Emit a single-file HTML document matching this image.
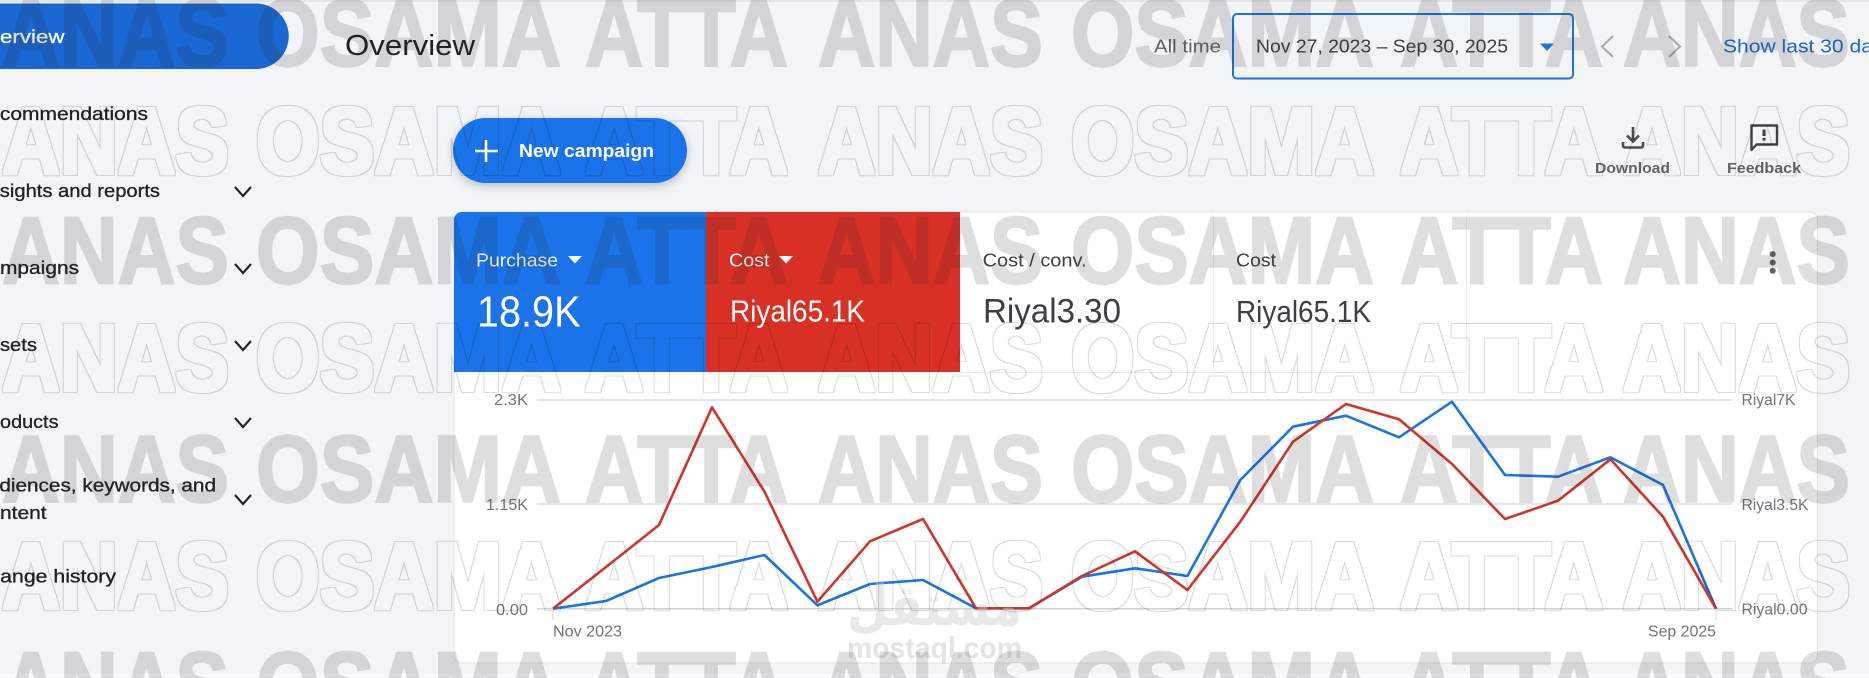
<!DOCTYPE html>
<html lang="en"><head><meta charset="utf-8"><title>Overview</title>
<style>
html,body{margin:0;padding:0;width:1869px;height:678px;overflow:hidden;background:#f3f4f6}
svg{display:block}
text{font-family:"Liberation Sans",sans-serif}
.nav{font-size:18px;fill:#202124;stroke:#202124;stroke-width:.3}
.lab{font-size:18px}
.ax{font-size:15.5px;fill:#70757a}
.wm{font-size:95px;font-weight:700}
.solid{fill:#282828;stroke:#282828;stroke-width:2.4;opacity:.15}
.outl{fill:#000;filter:url(#ol)}
</style></head><body>
<svg width="1869" height="678" viewBox="0 0 1869 678" xmlns="http://www.w3.org/2000/svg">
<defs>
<filter id="ol" filterUnits="userSpaceOnUse" x="0" y="-90" width="1869" height="110" color-interpolation-filters="sRGB">
<feMorphology in="SourceAlpha" operator="dilate" radius="1.4" result="a"/>
<feMorphology in="SourceAlpha" operator="dilate" radius="2.4" result="b"/>
<feComposite in="b" in2="a" operator="out" result="ring"/>
<feFlood flood-color="#000" flood-opacity=".14"/>
<feComposite in2="ring" operator="in"/>
</filter>
</defs>
<rect width="1869" height="678" fill="#f3f4f6"/>
<rect x="0" y="0" width="1869" height="2" fill="#e4e5e7"/>
<rect x="0" y="673" width="1869" height="5" fill="#f8f9fa"/>

<!-- sidebar -->
<path d="M-10 3.5H256a32.75 32.75 0 0 1 0 65.5H-10z" fill="#1967d2"/>
<text x="-28.500" y="43" textLength="93" lengthAdjust="spacingAndGlyphs" class="lab" fill="#fff" stroke="#fff" stroke-width=".3">Overview</text>
<text x="-27" y="120" textLength="175" lengthAdjust="spacingAndGlyphs" class="nav">Recommendations</text>
<text x="-17" y="197" textLength="177" lengthAdjust="spacingAndGlyphs" class="nav">Insights and reports</text>
<text x="-26.700" y="274" textLength="105.700" lengthAdjust="spacingAndGlyphs" class="nav">Campaigns</text>
<text x="-23.600" y="351" textLength="60.600" lengthAdjust="spacingAndGlyphs" class="nav">Assets</text>
<text x="-19.800" y="428" textLength="78.300" lengthAdjust="spacingAndGlyphs" class="nav">Products</text>
<text x="-26" y="491.500" textLength="242" lengthAdjust="spacingAndGlyphs" class="nav">Audiences, keywords, and</text>
<text x="-26.800" y="519" textLength="73.400" lengthAdjust="spacingAndGlyphs" class="nav">Content</text>
<text x="-27" y="582.500" textLength="143" lengthAdjust="spacingAndGlyphs" class="nav">Change history</text>
<g fill="none" stroke="#202124" stroke-width="2.1">
<path d="M235 187l8 9 8-9"/><path d="M235 264l8 9 8-9"/><path d="M235 341l8 9 8-9"/><path d="M235 418l8 9 8-9"/><path d="M235 495l8 9 8-9"/>
</g>

<!-- header -->
<text x="345" y="55" textLength="130" lengthAdjust="spacingAndGlyphs" font-size="29" fill="#202124">Overview</text>
<text x="1154" y="52.700" textLength="67" lengthAdjust="spacingAndGlyphs" class="lab" fill="#5f6368">All time</text>
<rect x="1233" y="14" width="340" height="64.500" rx="4" fill="none" stroke="#1a73e8" stroke-width="2"/>
<text x="1256" y="52.700" textLength="252" lengthAdjust="spacingAndGlyphs" class="lab" fill="#3c4043">Nov 27, 2023 – Sep 30, 2025</text>
<path d="M1540 43.500h14l-7 7.500z" fill="#1a73e8"/>
<path d="M1613 36l-11 10.500 11 10.500" fill="none" stroke="#a8abaf" stroke-width="2.200"/>
<path d="M1669 36l11 10.500-11 10.500" fill="none" stroke="#a8abaf" stroke-width="2.200"/>
<text x="1723" y="52.700" textLength="171" lengthAdjust="spacingAndGlyphs" class="lab" fill="#1967d2">Show last 30 days</text>

<!-- new campaign -->
<rect x="453" y="118" width="234" height="65" rx="32.500" fill="#1a73e8" style="filter:drop-shadow(0 3px 5px rgba(60,64,67,.3))"/>
<path d="M486 140v22M475 151h23" stroke="#fff" stroke-width="2.600" fill="none"/>
<text x="519" y="157" textLength="135" lengthAdjust="spacingAndGlyphs" font-size="18" font-weight="700" fill="#fff">New campaign</text>

<!-- download / feedback -->
<path d="M1633 127v14.500M1627 135.500l6 6 6-6" fill="none" stroke="#4a4e52" stroke-width="2.600"/>
<path d="M1623 142v3.500a2 2 0 0 0 2 2h16a2 2 0 0 0 2-2V142" fill="none" stroke="#4a4e52" stroke-width="2.600"/>
<text x="1595" y="173" textLength="75" lengthAdjust="spacingAndGlyphs" font-size="15" font-weight="700" fill="#5f6368">Download</text>
<path d="M1751.500 125.500h25.500v19h-20.500l-5 5.500z" fill="none" stroke="#3f4246" stroke-width="2.400" stroke-linejoin="round"/>
<path d="M1764 129.500v6.500M1764 138v2.500" stroke="#3f4246" stroke-width="3"/>
<text x="1727" y="173" textLength="74" lengthAdjust="spacingAndGlyphs" font-size="15" font-weight="700" fill="#5f6368">Feedback</text>

<!-- card -->
<rect x="454" y="212" width="1363.500" height="451" rx="8" fill="#fff" stroke="#e2e3e5" stroke-width="1"/>
<path d="M454 372V220a8 8 0 0 1 8-8H706v160z" fill="#1a73e8"/>
<rect x="706" y="212" width="254" height="160" fill="#d93025"/>
<path d="M1213.500 212v160M1466.500 212v160" stroke="#eceded" stroke-width="1"/>
<path d="M960 372.500H1466" stroke="#e8e9ea" stroke-width="1"/>

<text x="476" y="266.700" textLength="82" lengthAdjust="spacingAndGlyphs" class="lab" fill="#fff">Purchase</text>
<path d="M568 256h14l-7 7.500z" fill="#fff"/>
<text x="477" y="326.700" textLength="103.500" lengthAdjust="spacingAndGlyphs" font-size="44" fill="#fff">18.9K</text>
<text x="729" y="266.700" textLength="40.500" lengthAdjust="spacingAndGlyphs" class="lab" fill="#fff">Cost</text>
<path d="M779 256h14l-7 7.500z" fill="#fff"/>
<text x="730" y="321.700" textLength="135" lengthAdjust="spacingAndGlyphs" font-size="31" fill="#fff">Riyal65.1K</text>
<text x="982.600" y="266.700" textLength="104" lengthAdjust="spacingAndGlyphs" class="lab" fill="#3c4043">Cost / conv.</text>
<text x="983" y="322.500" textLength="138" lengthAdjust="spacingAndGlyphs" font-size="34" fill="#3c4043">Riyal3.30</text>
<text x="1236" y="266.700" textLength="40" lengthAdjust="spacingAndGlyphs" class="lab" fill="#3c4043">Cost</text>
<text x="1236" y="322" textLength="135" lengthAdjust="spacingAndGlyphs" font-size="31" fill="#3c4043">Riyal65.1K</text>
<g fill="#5f6368"><circle cx="1772.700" cy="254" r="3"/><circle cx="1772.700" cy="262.500" r="3"/><circle cx="1772.700" cy="270.700" r="3"/></g>

<!-- chart -->
<g stroke="#dcdee1" stroke-width="1.500" fill="none">
<path d="M537 400H1732.500M537 504H1732.500"/>
<path d="M537 608.700H1732.500" stroke="#cfd1d4"/>
<path d="M553 608v12M1716 608v12" stroke="#e2e3e5"/>
</g>
<text x="494" y="405" textLength="34" lengthAdjust="spacingAndGlyphs" class="ax">2.3K</text>
<text x="486" y="510" textLength="42" lengthAdjust="spacingAndGlyphs" class="ax">1.15K</text>
<text x="496" y="615" textLength="32" lengthAdjust="spacingAndGlyphs" class="ax">0.00</text>
<text x="553" y="636.700" textLength="69" lengthAdjust="spacingAndGlyphs" class="ax">Nov 2023</text>
<text x="1648" y="636.700" textLength="68" lengthAdjust="spacingAndGlyphs" class="ax">Sep 2025</text>
<text x="1741.500" y="405" textLength="54" lengthAdjust="spacingAndGlyphs" class="ax">Riyal7K</text>
<text x="1741.500" y="510" textLength="67" lengthAdjust="spacingAndGlyphs" class="ax">Riyal3.5K</text>
<text x="1741.500" y="614.500" textLength="66" lengthAdjust="spacingAndGlyphs" class="ax">Riyal0.00</text>
<polyline fill="none" stroke="#1a73e8" stroke-width="2.600" stroke-linejoin="round" points="553,608.700 606,601 659,578 712,567 764.500,555 817.400,605.300 870,584 923,580 976,608.300 1029,608.300 1082,576.700 1135,568.300 1187.400,576 1240.300,480 1293,426.700 1346,415.700 1399,437.300 1452,401.700 1505,475 1558,476.700 1610.400,457.300 1663,485 1716,608.700"/>
<polyline fill="none" stroke="#d1352a" stroke-width="2.600" stroke-linejoin="round" points="553,608.700 606,567 659,525 712,407.300 764.500,491.700 817.400,601.700 870,541.300 923,519 976,608.300 1029,608.300 1082,576 1135,551.300 1187.400,590 1240.300,521.700 1293,441.700 1346,404 1399,419.300 1452,464 1505,519 1558,500.700 1610.400,459.300 1663,516.700 1716,608.700"/>

<!-- mostaql mark -->
<g opacity=".45">
<text x="1022" y="625" textLength="175" lengthAdjust="spacingAndGlyphs" font-size="56" font-weight="700" fill="#cfcfcf" style="font-family:'DejaVu Sans',sans-serif" direction="rtl">مستقل</text>
<text x="847" y="658" textLength="175" lengthAdjust="spacingAndGlyphs" font-size="30" font-weight="700" fill="#c4c4c4">mostaql.com</text>
</g>

<!-- repeated overlay text -->
<g class="wm solid" transform="translate(0,65.500)"><text x="2" textLength="227" lengthAdjust="spacingAndGlyphs">ANAS</text><text x="256" textLength="305" lengthAdjust="spacingAndGlyphs">OSAMA</text><text x="585" textLength="203" lengthAdjust="spacingAndGlyphs">ATTA</text><text x="818" textLength="225" lengthAdjust="spacingAndGlyphs">ANAS</text><text x="1071" textLength="303" lengthAdjust="spacingAndGlyphs">OSAMA</text><text x="1400" textLength="203" lengthAdjust="spacingAndGlyphs">ATTA</text><text x="1623" textLength="227" lengthAdjust="spacingAndGlyphs">ANAS</text></g>
<g class="wm outl" transform="translate(0,173.500)"><text x="2" textLength="227" lengthAdjust="spacingAndGlyphs">ANAS</text><text x="256" textLength="305" lengthAdjust="spacingAndGlyphs">OSAMA</text><text x="585" textLength="203" lengthAdjust="spacingAndGlyphs">ATTA</text><text x="818" textLength="225" lengthAdjust="spacingAndGlyphs">ANAS</text><text x="1071" textLength="303" lengthAdjust="spacingAndGlyphs">OSAMA</text><text x="1400" textLength="203" lengthAdjust="spacingAndGlyphs">ATTA</text><text x="1623" textLength="227" lengthAdjust="spacingAndGlyphs">ANAS</text></g>
<g class="wm solid" transform="translate(0,283)"><text x="2" textLength="227" lengthAdjust="spacingAndGlyphs">ANAS</text><text x="256" textLength="305" lengthAdjust="spacingAndGlyphs">OSAMA</text><text x="585" textLength="203" lengthAdjust="spacingAndGlyphs">ATTA</text><text x="818" textLength="225" lengthAdjust="spacingAndGlyphs">ANAS</text><text x="1071" textLength="303" lengthAdjust="spacingAndGlyphs">OSAMA</text><text x="1400" textLength="203" lengthAdjust="spacingAndGlyphs">ATTA</text><text x="1623" textLength="227" lengthAdjust="spacingAndGlyphs">ANAS</text></g>
<g class="wm outl" transform="translate(0,390.500)"><text x="2" textLength="227" lengthAdjust="spacingAndGlyphs">ANAS</text><text x="256" textLength="305" lengthAdjust="spacingAndGlyphs">OSAMA</text><text x="585" textLength="203" lengthAdjust="spacingAndGlyphs">ATTA</text><text x="818" textLength="225" lengthAdjust="spacingAndGlyphs">ANAS</text><text x="1071" textLength="303" lengthAdjust="spacingAndGlyphs">OSAMA</text><text x="1400" textLength="203" lengthAdjust="spacingAndGlyphs">ATTA</text><text x="1623" textLength="227" lengthAdjust="spacingAndGlyphs">ANAS</text></g>
<g class="wm solid" transform="translate(0,501.500)"><text x="2" textLength="227" lengthAdjust="spacingAndGlyphs">ANAS</text><text x="256" textLength="305" lengthAdjust="spacingAndGlyphs">OSAMA</text><text x="585" textLength="203" lengthAdjust="spacingAndGlyphs">ATTA</text><text x="818" textLength="225" lengthAdjust="spacingAndGlyphs">ANAS</text><text x="1071" textLength="303" lengthAdjust="spacingAndGlyphs">OSAMA</text><text x="1400" textLength="203" lengthAdjust="spacingAndGlyphs">ATTA</text><text x="1623" textLength="227" lengthAdjust="spacingAndGlyphs">ANAS</text></g>
<g class="wm outl" transform="translate(0,608.500)"><text x="2" textLength="227" lengthAdjust="spacingAndGlyphs">ANAS</text><text x="256" textLength="305" lengthAdjust="spacingAndGlyphs">OSAMA</text><text x="585" textLength="203" lengthAdjust="spacingAndGlyphs">ATTA</text><text x="818" textLength="225" lengthAdjust="spacingAndGlyphs">ANAS</text><text x="1071" textLength="303" lengthAdjust="spacingAndGlyphs">OSAMA</text><text x="1400" textLength="203" lengthAdjust="spacingAndGlyphs">ATTA</text><text x="1623" textLength="227" lengthAdjust="spacingAndGlyphs">ANAS</text></g>
<g class="wm solid" transform="translate(0,718)"><text x="2" textLength="227" lengthAdjust="spacingAndGlyphs">ANAS</text><text x="256" textLength="305" lengthAdjust="spacingAndGlyphs">OSAMA</text><text x="585" textLength="203" lengthAdjust="spacingAndGlyphs">ATTA</text><text x="818" textLength="225" lengthAdjust="spacingAndGlyphs">ANAS</text><text x="1071" textLength="303" lengthAdjust="spacingAndGlyphs">OSAMA</text><text x="1400" textLength="203" lengthAdjust="spacingAndGlyphs">ATTA</text><text x="1623" textLength="227" lengthAdjust="spacingAndGlyphs">ANAS</text></g>
</svg>
</body></html>
